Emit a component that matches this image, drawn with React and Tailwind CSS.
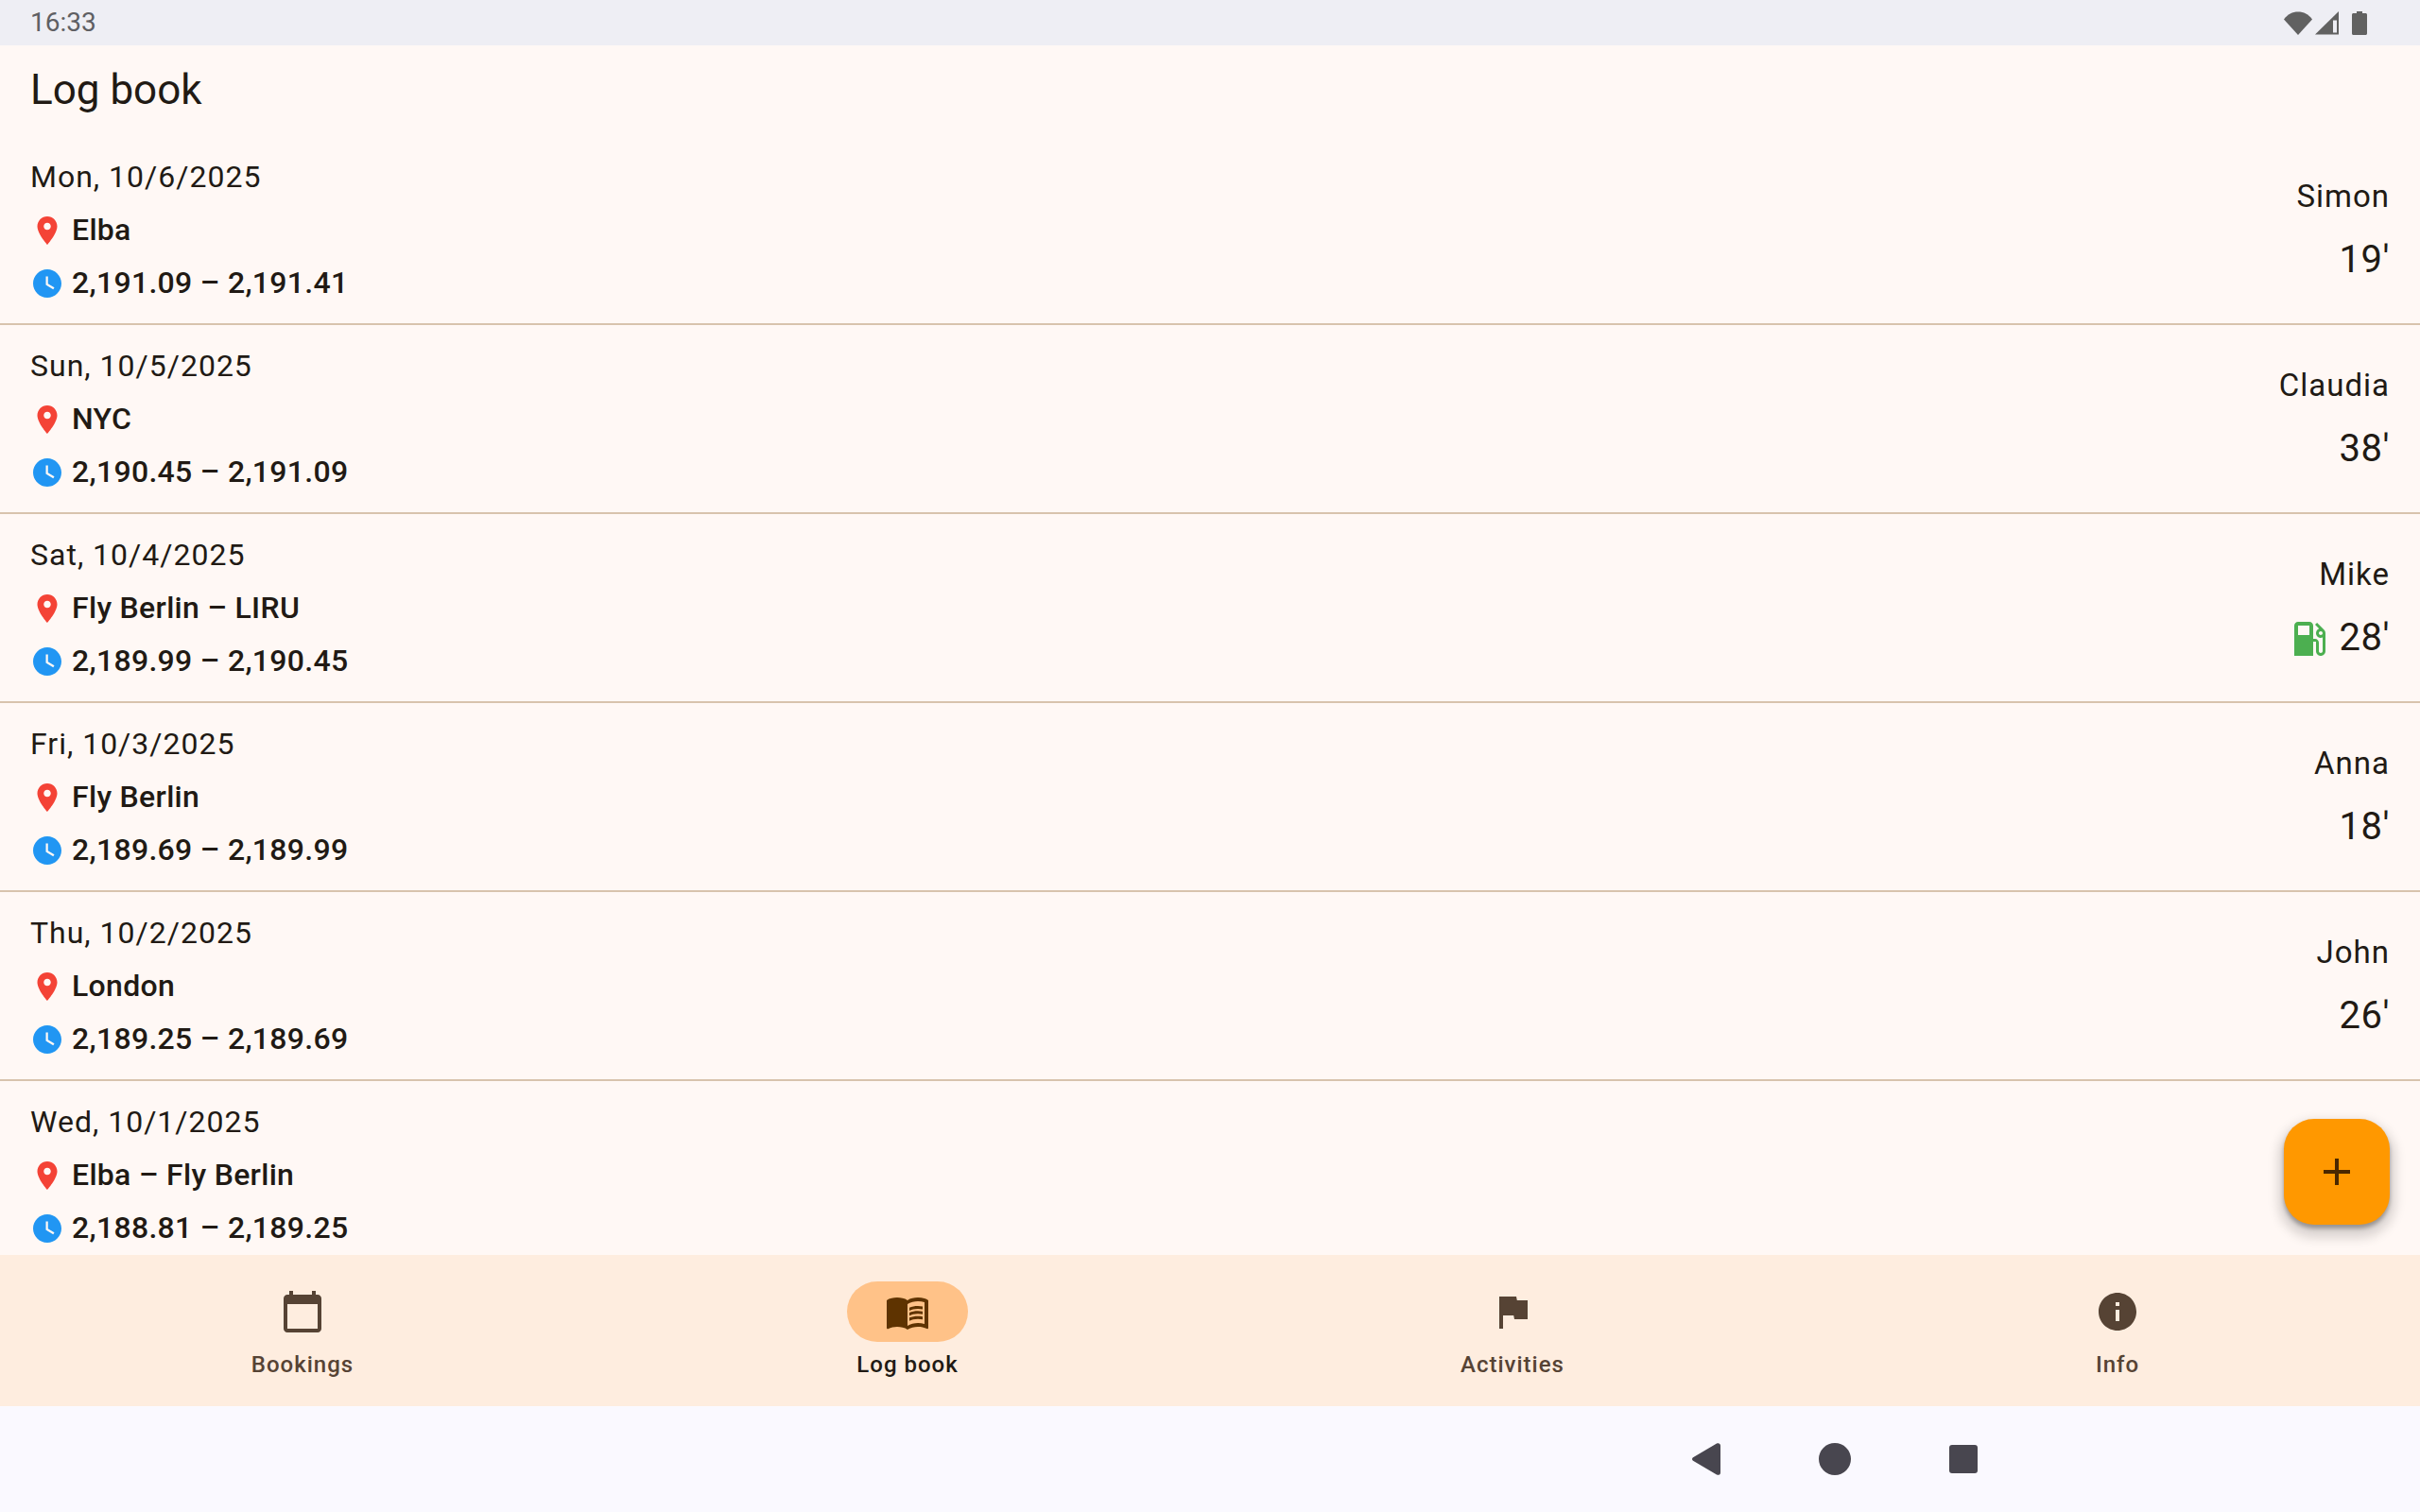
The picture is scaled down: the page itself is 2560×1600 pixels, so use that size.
import React from "react";

const entries = [
  { date: "Mon, 10/6/2025", place: "Elba", range: "2,191.09 – 2,191.41", pilot: "Simon", mins: "19'" },
  { date: "Sun, 10/5/2025", place: "NYC", range: "2,190.45 – 2,191.09", pilot: "Claudia", mins: "38'" },
  { date: "Sat, 10/4/2025", place: "Fly Berlin – LIRU", range: "2,189.99 – 2,190.45", pilot: "Mike", mins: "28'", fuel: true },
  { date: "Fri, 10/3/2025", place: "Fly Berlin", range: "2,189.69 – 2,189.99", pilot: "Anna", mins: "18'" },
  { date: "Thu, 10/2/2025", place: "London", range: "2,189.25 – 2,189.69", pilot: "John", mins: "26'" },
  { date: "Wed, 10/1/2025", place: "Elba – Fly Berlin", range: "2,188.81 – 2,189.25", pilot: "", mins: "" },
];

function Icon({ d, className }) {
  return (
    <svg viewBox="0 0 24 24" fill="currentColor" className={className}>
      <path d={d} />
    </svg>
  );
}

const pin = "M12 2C8.13 2 5 5.13 5 9c0 5.25 7 13 7 13s7-7.75 7-13c0-3.87-3.13-7-7-7zm0 9.5c-1.38 0-2.5-1.12-2.5-2.5s1.12-2.5 2.5-2.5 2.5 1.12 2.5 2.5-1.12 2.5-2.5 2.5z";
const clock = "M12 2C6.5 2 2 6.5 2 12s4.5 10 10 10 10-4.5 10-10S17.5 2 12 2zm4.2 14.2L11 13V7h1.5v5.2l4.5 2.7-.8 1.3z";
const fuel = "M19.77 7.23l.01-.01-3.72-3.72L15 4.56l2.11 2.11c-.94.36-1.61 1.26-1.61 2.33 0 1.38 1.12 2.5 2.5 2.5.36 0 .69-.08 1-.21v7.21c0 .55-.45 1-1 1s-1-.45-1-1V14c0-1.1-.9-2-2-2h-1V5c0-1.1-.9-2-2-2H6c-1.1 0-2 .9-2 2v16h10v-7.5h1.5v5c0 1.38 1.12 2.5 2.5 2.5s2.5-1.12 2.5-2.5V9c0-.69-.28-1.32-.73-1.77zM12 10H6V5h6v5zm6 0c-.55 0-1-.45-1-1s.45-1 1-1 1 .45 1 1-.45 1-1 1z";
const calendar = "M20 3h-1V1h-2v2H7V1H5v2H4c-1.1 0-2 .9-2 2v16c0 1.1.9 2 2 2h16c1.1 0 2-.9 2-2V5c0-1.1-.9-2-2-2zm0 18H4V8h16v13z";
const book = "M21 5c-1.11-.35-2.33-.5-3.5-.5-1.95 0-4.05.4-5.5 1.5-1.45-1.1-3.55-1.5-5.5-1.5S2.45 4.9 1 6v14.65c0 .25.25.5.5.5.1 0 .15-.05.25-.05C3.1 20.45 5.05 20 6.5 20c1.95 0 4.05.4 5.5 1.5 1.35-.85 3.8-1.5 5.5-1.5 1.65 0 3.35.3 4.75 1.05.1.05.15.05.25.05.25 0 .5-.25.5-.5V6c-.6-.45-1.25-.75-2-1zm0 13.5c-1.1-.35-2.3-.5-3.5-.5-1.7 0-4.15.65-5.5 1.5V8c1.35-.85 3.8-1.5 5.5-1.5 1.2 0 2.4.15 3.5.5v11.5zM17.5 10.5c.88 0 1.73.09 2.5.26V9.24c-.79-.15-1.64-.24-2.5-.24-1.7 0-3.24.29-4.5.83v1.66c1.13-.64 2.7-.99 4.5-.99zM13 12.49v1.66c1.13-.64 2.7-.99 4.5-.99.88 0 1.73.09 2.5.26V11.9c-.79-.15-1.64-.24-2.5-.24-1.7 0-3.24.3-4.5.83zM17.5 14.33c-1.7 0-3.24.29-4.5.83v1.66c1.13-.64 2.7-.99 4.5-.99.88 0 1.73.09 2.5.26v-1.52c-.79-.16-1.64-.24-2.5-.24z";
const flag = "M14.4 6L14 4H5v17h2v-7h5.6l.4 2h7V6z";
const info = "M12 2C6.48 2 2 6.48 2 12s4.48 10 10 10 10-4.48 10-10S17.52 2 12 2zm1 15h-2v-6h2v6zm0-8h-2V7h2v2z";

const tabs = [
  { label: "Bookings", icon: calendar },
  { label: "Log book", icon: book, active: true },
  { label: "Activities", icon: flag },
  { label: "Info", icon: info },
];

function StatusBar() {
  return (
    <div className="h-[48px] shrink-0 bg-[#eeeef4] flex items-center justify-between pl-[32px] pr-[56px] text-[#5f5f63]">
      <span className="text-[28px] leading-[48px]">16:33</span>
      <div className="flex items-center">
        <svg viewBox="0 0 30 25" className="w-[30px] h-[25px] mr-[3px]" fill="#616161">
          <path d="M0 8.5C4 3 9 .5 15 .5S26 3 30 8.5L15 25z" />
        </svg>
        <svg viewBox="0 0 25 25" className="w-[25px] h-[25px] mr-[14px]">
          <path d="M0 24.5L25 0v24.5z" fill="#616161" />
          <path d="M19 9.5h4v13h-4z" fill="#eeeef4" />
        </svg>
        <svg viewBox="0 0 16 25" className="w-[16px] h-[25px]" fill="#616161">
          <path d="M5 0h6v2h3.5c.8 0 1.5.7 1.5 1.5v20c0 .8-.7 1.5-1.5 1.5h-13C.7 25 0 24.3 0 23.5v-20C0 2.7.7 2 1.5 2H5z" />
        </svg>
      </div>
    </div>
  );
}

function LogRow({ entry }) {
  return (
    <div className="shrink-0 h-[200px] border-b-2 border-[#d8c3ad] px-[32px] pt-[16px] flex justify-between text-[#211a14]">
      <div>
        <div className="h-[56px] pb-[2px] flex items-center text-[32px] tracking-[1px]">{entry.date}</div>
        <div className="h-[56px] flex items-center gap-[8px]">
          <Icon d={pin} className="w-[36px] h-[36px] text-[#f44336]" />
          <span className="pb-[2px] text-[32px] font-medium tracking-[0.3px]">{entry.place}</span>
        </div>
        <div className="h-[56px] flex items-center gap-[8px]">
          <Icon d={clock} className="w-[36px] h-[36px] text-[#2196f3]" />
          <span className="pb-[2px] text-[32px] font-medium tracking-[0.3px]">{entry.range}</span>
        </div>
      </div>
      <div className="flex flex-col items-end pt-[20px]">
        <div className="h-[56px] flex items-center text-[33px] tracking-[1px]">{entry.pilot}</div>
        <div className="h-[68px] mt-[4px] flex items-center gap-[8px]">
          {entry.fuel && <Icon d={fuel} className="mt-[4px] w-[48px] h-[48px] text-[#4caf50]" />}
          <span className="pt-[2px] text-[40px] tracking-[0.5px]">{entry.mins}</span>
        </div>
      </div>
    </div>
  );
}

export default function App() {
  return (
    <div className="relative w-full h-[1600px] flex flex-col overflow-hidden bg-[#fff8f5] font-['Roboto',sans-serif]">
      <StatusBar />
      <div className="h-[96px] pb-[2px] shrink-0 flex items-center px-[32px] text-[44px] text-[#211a14]">Log book</div>

      <div className="flex-1 min-h-0 overflow-hidden flex flex-col">
        {entries.map((entry) => (
          <LogRow key={entry.date} entry={entry} />
        ))}
      </div>

      <div className="h-[160px] shrink-0 bg-[#feeddf] grid grid-cols-4">
        {tabs.map((tab) => (
          <div key={tab.label} className="flex flex-col items-center pt-[28px]">
            <div className={`w-[128px] h-[64px] rounded-full flex items-center justify-center ${tab.active ? "bg-[#ffc288] text-[#5e3300]" : "text-[#564334]"}`}>
              <Icon d={tab.icon} className="w-[48px] h-[48px]" />
            </div>
            <span className={`mt-[8px] text-[24px] leading-[32px] font-medium tracking-[1px] ${tab.active ? "text-[#211a14]" : "text-[#564334]"}`}>{tab.label}</span>
          </div>
        ))}
      </div>

      <div className="h-[112px] shrink-0 bg-[#faf9ff] flex items-center justify-end gap-[104px] pr-[468px]">
        <svg viewBox="0 0 30 34" className="w-[30px] h-[34px]" fill="#48464f">
          <path d="M1 15.2L26 .6c1.8-1 4-.2 4 2.2v28.4c0 2.4-2.2 3.2-4 2.2L1 18.8c-1.3-.8-1.3-2.8 0-3.6z" />
        </svg>
        <div className="w-[34px] h-[34px] rounded-full bg-[#48464f]" />
        <div className="w-[30px] h-[30px] rounded-[3px] bg-[#48464f]" />
      </div>

      <button className="absolute left-[2416px] top-[1184px] w-[112px] h-[112px] rounded-[32px] bg-[#ff9800] text-[#4a2800] flex items-center justify-center shadow-[0_8px_12px_6px_rgba(0,0,0,0.15),0_4px_4px_rgba(0,0,0,0.3)]">
        <Icon d="M19 13h-6v6h-2v-6H5v-2h6V5h2v6h6v2z" className="w-[48px] h-[48px]" />
      </button>
    </div>
  );
}
